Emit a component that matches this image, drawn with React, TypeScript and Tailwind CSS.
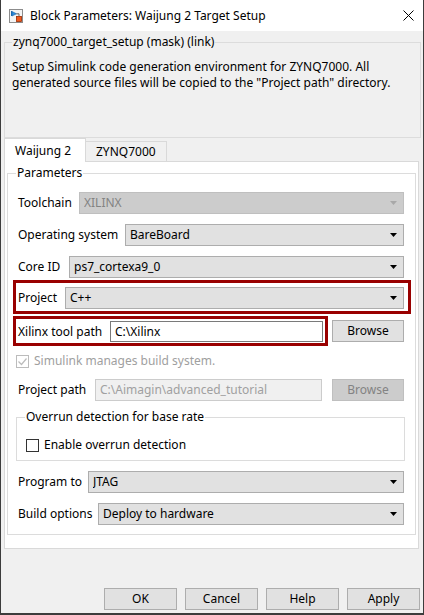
import React from "react";

function Arrow({ disabled }: { disabled?: boolean }) {
  return (
    <svg width="7" height="4" viewBox="0 0 7 4" className="shrink-0">
      <path d="M0 0h7L3.5 4z" fill={disabled ? "#a8a8a8" : "#000000"} />
    </svg>
  );
}

function Combo({ value, disabled }: { value: string; disabled?: boolean }) {
  return (
    <div
      className={
        disabled
          ? "flex-1 h-[22px] flex items-center pl-[4px] pr-[6px] border border-[#bfbfbf] bg-[#cccccc] text-[#838383]"
          : "flex-1 h-[22px] flex items-center pl-[4px] pr-[6px] border border-[#adadad] bg-[#e1e1e1] text-black"
      }
    >
      <span className="flex-1 truncate">{value}</span>
      <Arrow disabled={disabled} />
    </div>
  );
}

function Row({ label, labelW, children, className = "" }: { label: string; labelW: string; children: React.ReactNode; className?: string }) {
  return (
    <div className={`flex items-center h-[22px] pl-[2px] pr-[2px] ${className}`}>
      <span className={`shrink-0 ${labelW}`}>{label}</span>
      {children}
    </div>
  );
}

function Checkbox({ checked, disabled }: { checked?: boolean; disabled?: boolean }) {
  return (
    <div
      className={
        disabled
          ? "w-[13px] h-[13px] border border-[#bcbcbc] bg-white flex items-center justify-center shrink-0"
          : "w-[13px] h-[13px] border border-[#333333] bg-white flex items-center justify-center shrink-0"
      }
    >
      {checked && (
        <svg width="11" height="11" viewBox="0 0 11 11">
          <path d="M1.5 5.5l3 3 5-6" fill="none" stroke={disabled ? "#bcbcbc" : "#000"} strokeWidth="1.2" />
        </svg>
      )}
    </div>
  );
}

function BlockIcon() {
  return (
    <svg width="14" height="14" viewBox="0 0 14 14" className="shrink-0">
      <rect x="0.5" y="0.5" width="13" height="13" fill="#f4f4f4" stroke="#8c8c8c" />
      <path d="M2.5 2v5" stroke="#1f6fb8" strokeWidth="1" />
      <path d="M3 2.5l4.5 2.3L3 7z" fill="#2e8fe0" stroke="#1a5f9e" strokeWidth="0.6" />
      <path d="M7.5 4.8h2.5v2.5" fill="none" stroke="#404040" strokeWidth="0.8" />
      <rect x="7.5" y="7.5" width="5" height="5" fill="#f05a1e" stroke="#9a2a00" strokeWidth="0.8" />
    </svg>
  );
}

export default function App() {
  return (
    <div className="w-[424px] h-[615px] bg-[#f0f0f0] border-x border-b-2 border-[#3c3c3c] flex flex-col text-[12px] leading-[16px] text-black font-['Noto_Sans',sans-serif] overflow-hidden">
      {/* Title bar */}
      <div className="h-[31px] bg-white flex items-center pl-[8px] shrink-0">
        <BlockIcon />
        <span className="ml-[7px]">Block Parameters: Waijung 2 Target Setup</span>
        <svg width="11" height="11" viewBox="0 0 11 11" className="ml-auto mr-[9px]">
          <path d="M0.5 0.5l10 10M10.5 0.5l-10 10" stroke="#000" strokeWidth="1" />
        </svg>
      </div>

      {/* Mask description */}
      <fieldset className="mt-[3px] ml-[3px] mr-[2px] h-[104px] border border-[#dcdcdc] pl-[7px] pt-[9px] shrink-0">
        <legend className="px-[1px]">zynq7000_target_setup (mask) (link)</legend>
        <p className="whitespace-nowrap">
          Setup Simulink code generation environment for ZYNQ7000. All
          <br />
          generated source files will be copied to the "Project path" directory.
        </p>
      </fieldset>

      {/* Tabs */}
      <div className="flex items-end h-[23px] ml-[3px] shrink-0">
        <div className="relative z-10 -mb-[1px] w-[82px] h-[24px] bg-white border-x border-t border-[#d9d9d9] flex items-center pl-[10px]">
          Waijung 2
        </div>
        <div className="w-[81px] h-[20px] bg-[#f0f0f0] border-t border-r border-[#d9d9d9] flex items-center pl-[10px]">
          ZYNQ7000
        </div>
      </div>

      {/* Tab panel */}
      <div className="ml-[3px] w-[415px] h-[388px] bg-white border border-[#d9d9d9] shrink-0 pt-[3px] px-[2px]">
        <fieldset className="border border-[#dcdcdc] pl-[8px] pr-[9px] pt-[11px] pb-[9px]">
          <legend className="px-[1px]">Parameters</legend>
          <div className="flex flex-col">
            <Row label="Toolchain" labelW="w-[61px]">
              <Combo value="XILINX" disabled />
            </Row>
            <Row label="Operating system" labelW="w-[107px]" className="mt-[10px]">
              <Combo value="BareBoard" />
            </Row>
            <Row label="Core ID" labelW="w-[51px]" className="mt-[10px]">
              <Combo value="ps7_cortexa9_0" />
            </Row>

            <div className="mt-[2px] -ml-[3px] -mr-[5px] h-[34px] border-[3px] border-[#990000] pt-[4px] pl-[2px] pr-[4px]">
              <div className="flex items-center h-[22px]">
                <span className="shrink-0 w-[47px]">Project</span>
                <Combo value="C++" />
              </div>
            </div>

            <div className="mt-[2px] flex items-start pr-[2px]">
              <div className="-ml-[3px] w-[315px] h-[30px] border-[3px] border-[#990000] pt-[2px] pl-[2px] pr-[2px] flex items-start">
                <span className="shrink-0 w-[92px] h-[21px] flex items-center">Xilinx tool path</span>
                <div className="flex-1 h-[21px] bg-white border border-[#7a7a7a] flex items-center pl-[4px]">C:\Xilinx</div>
              </div>
              <button className="ml-auto mt-[4px] w-[72px] h-[22px] bg-[#e1e1e1] border border-[#adadad] flex items-center justify-center">
                Browse
              </button>
            </div>

            <div className="mt-[8px] h-[14px] flex items-center gap-[5px] text-[#a0a0a0]">
              <Checkbox checked disabled />
              <span>Simulink manages build system.</span>
            </div>

            <Row label="Project path" labelW="w-[77px]" className="mt-[11px]">
              <div className="w-[227px] h-[22px] bg-[#f0f0f0] border border-[#cccccc] text-[#a0a0a0] flex items-center pl-[4px] whitespace-nowrap overflow-hidden">
                C:\Aimagin\advanced_tutorial
              </div>
              <div className="ml-auto w-[72px] h-[22px] bg-[#cccccc] border border-[#bfbfbf] text-[#838383] flex items-center justify-center">
                Browse
              </div>
            </Row>

            <fieldset className="mt-[8px] mr-[1px] border border-[#dcdcdc] pl-[8px] pt-[13px] pb-[8px]">
              <legend className="px-[1px]">Overrun detection for base rate</legend>
              <div className="h-[14px] flex items-center gap-[5px] pl-[1px]">
                <Checkbox />
                <span>Enable overrun detection</span>
              </div>
            </fieldset>

            <Row label="Program to" labelW="w-[70px]" className="mt-[10px]">
              <Combo value="JTAG" />
            </Row>
            <Row label="Build options" labelW="w-[80px]" className="mt-[10px]">
              <Combo value="Deploy to hardware" />
            </Row>
          </div>
        </fieldset>
      </div>

      {/* Buttons */}
      <div className="mt-auto mb-[3px] mr-[3px] flex justify-end gap-[8px]">
        {["OK", "Cancel", "Help", "Apply"].map((b) => (
          <button key={b} className="w-[73px] h-[22px] bg-[#e1e1e1] border border-[#adadad] flex items-center justify-center">
            {b}
          </button>
        ))}
      </div>
    </div>
  );
}
